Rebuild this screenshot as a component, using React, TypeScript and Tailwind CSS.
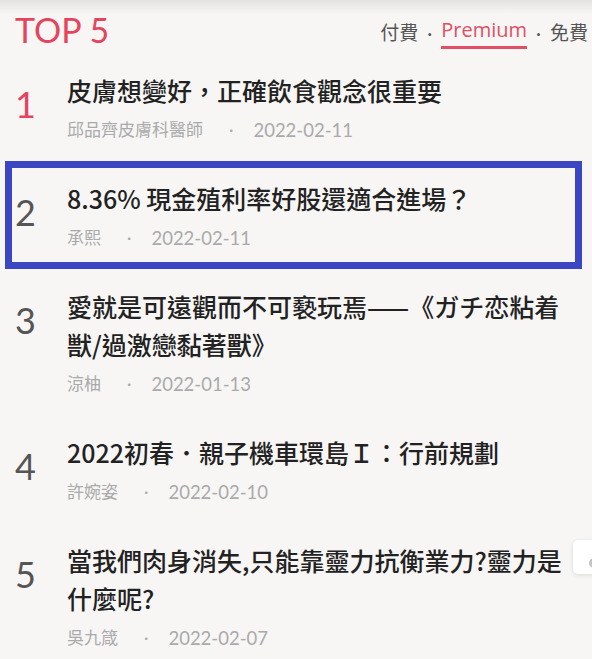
import React from "react";

type TArticle = {
  title: string;
  author: string;
  date: string;
};

const articles: TArticle[] = [
  { title: "皮膚想變好，正確飲食觀念很重要", author: "邱品齊皮膚科醫師", date: "2022-02-11" },
  { title: "8.36% 現金殖利率好股還適合進場？", author: "承熙", date: "2022-02-11" },
  {
    title: "愛就是可遠觀而不可褻玩焉——《ガチ恋粘着獣/過激戀黏著獸》",
    author: "涼柚",
    date: "2022-01-13",
  },
  { title: "2022初春．親子機車環島Ｉ：行前規劃", author: "許婉姿", date: "2022-02-10" },
  {
    title: "當我們肉身消失,只能靠靈力抗衡業力?靈力是什麼呢?",
    author: "吳九箴",
    date: "2022-02-07",
  },
];

export default function App() {
  return (
    <div className="relative w-[592px] h-[659px] overflow-hidden bg-[linear-gradient(to_bottom,#e4e3e2_0px,#f7f6f5_14px)] font-['Lato','Noto_Sans_CJK_TC',sans-serif]">
      <div className="flex items-start justify-between h-[53px] pl-[15px] pr-[4px]">
        <h2 className="pt-[9px] text-[34px] leading-[41px] text-[#e6435c]">TOP 5</h2>
        <div className="flex items-center pt-[16px] text-[19px] leading-[28px] text-[#555]">
          <span>付費</span>
          <span className="mx-[9px]">·</span>
          <span className="pb-[2px] border-b-[3px] border-[#e04f64] text-[#e04f64] font-['Open_Sans',sans-serif] text-[20px]">
            Premium
          </span>
          <span className="mx-[9px]">·</span>
          <span>免費</span>
        </div>
      </div>

      <ul className="pl-[5px] pr-[10px]">
        {articles.map((article, i) => (
          <li
            key={i}
            className={
              "flex py-[11px] pl-[3px] border-[7px] " +
              (i === 1 ? "border-[#3c46c2]" : "border-transparent")
            }
          >
            <div
              className={
                "w-[52px] shrink-0 pt-[15px] text-[36px] leading-none " +
                (i === 0 ? "text-[#e6435c]" : "text-[#555]")
              }
            >
              {i + 1}
            </div>
            <div className="flex-1 min-w-0">
              <h3 className="font-['Noto_Sans_CJK_TC',sans-serif] text-[25px] leading-[38px] font-medium text-[#222]">
                {article.title}
              </h3>
              <div className="mt-[8px] h-[26px] flex items-center text-[17px] leading-[26px] text-[#aaa]">
                <span>{article.author}</span>
                <span className="ml-[26px] mr-[20px]">·</span>
                <span className="text-[18.5px]">{article.date}</span>
              </div>
            </div>
          </li>
        ))}
      </ul>

      <div className="absolute left-[573px] top-[540px] w-[40px] h-[34px] rounded-[5px] bg-white shadow-[0_1px_4px_rgba(0,0,0,0.12)]">
        <div className="absolute left-[16px] top-[18px] w-[10px] h-[10px] rounded-full bg-[#c4c4c4]" />
      </div>
    </div>
  );
}
